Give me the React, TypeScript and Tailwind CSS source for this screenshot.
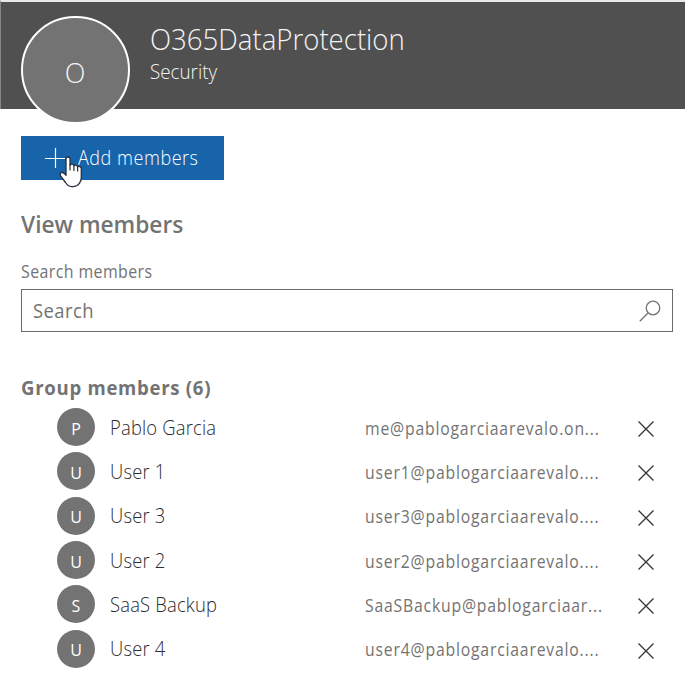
import React from "react";

const members = [
  { initial: "P", name: "Pablo Garcia", email: "me@pablogarciaarevalo.on..." },
  { initial: "U", name: "User 1", email: "user1@pablogarciaarevalo...." },
  { initial: "U", name: "User 3", email: "user3@pablogarciaarevalo...." },
  { initial: "U", name: "User 2", email: "user2@pablogarciaarevalo...." },
  { initial: "S", name: "SaaS Backup", email: "SaaSBackup@pablogarciaar..." },
  { initial: "U", name: "User 4", email: "user4@pablogarciaarevalo...." },
];

function Pointer() {
  return (
    <svg className="absolute left-[38px] top-[19px] h-[34px] w-[25px]" viewBox="0 0 25 34" aria-hidden="true">
      <path
        d="M7 4C7 2.700 7.800 2 9 2s2 .7 2 2v6c.4-.5 1-.8 1.700-.8 1.200 0 2 .7 2.200 1.500.4-.4.9-.6 1.500-.6 1.200 0 2 .7 2.200 1.700.4-.4.9-.5 1.400-.5 1.400 0 2.300 1 2.300 2.300v8.300c0 2.600-.6 4.700-1.800 6.300-1.600 2.200-4 3.500-6.900 3.500-3.100 0-5.400-1.500-7.100-4.200L1.600 20.800c-.7-1.400-.4-2.400.6-3 1-.6 2.200-.2 3.100.8L7 20.300z"
        fill="#fff" stroke="#2b2f3d" strokeWidth="1.300" strokeLinejoin="round"
      />
      <path d="M11 9.500v6M14.900 10.500v5.500M18.600 12v4.500" stroke="#2b2f3d" strokeWidth="1.200" />
    </svg>
  );
}

export default function App() {
  return (
    <main className="h-[685px] w-[685px] overflow-hidden bg-white font-['Open_Sans','Noto_Sans',sans-serif] text-[#737373]">
      <header className="flex h-[109px] border-t-2 border-l border-t-[#e8e8ea] border-l-[#858585] bg-[#505050] pl-[19.500px] text-[#f4f4f4]">
        <div className="mt-[14px] flex h-[108px] w-[109px] shrink-0 items-center justify-center rounded-full border-2 border-white bg-[#737373] pt-[6px] text-[27px] font-light">
          O
        </div>
        <div className="pl-[20.500px] pt-[17px] whitespace-nowrap">
          <h1 className="origin-left scale-x-[0.92] text-[30px] leading-[40px] font-light">O365DataProtection</h1>
          <p className="origin-left scale-x-[0.94] text-[20px] leading-[26px] font-light">Security</p>
        </div>
      </header>
      <section className="pl-[21px] pt-[27px]">
        <button className="relative flex h-[44px] w-[203px] items-center bg-[#1764ab] pl-[24px] text-white">
          <svg className="h-[20px] w-[20px]" viewBox="0 0 20 20" aria-hidden="true">
            <path d="M10.500 0v20M0 10.500h20" stroke="#fff" strokeWidth="1.200" />
          </svg>
          <span className="ml-[13px] origin-left scale-x-[0.9] text-[20px] leading-[26px] font-light tracking-[0.6px] whitespace-nowrap">Add members</span>
          <Pointer />
        </button>
        <h2 className="mt-[27px] origin-left scale-x-[0.945] text-[24px] leading-[34px] font-semibold">View members</h2>
        <label className="mt-[18px] block origin-left scale-x-[0.91] text-[17.500px] leading-[24px] tracking-[0.45px]">Search members</label>
        <div className="mt-[6px] flex h-[43px] w-[652px] items-center justify-between border border-[#6b6b6b] pl-[11px] pr-[11px]">
          <span className="origin-left scale-x-[0.92] pt-px text-[20px] leading-[26px] tracking-[0.5px]">Search</span>
          <svg className="h-[22px] w-[22px]" viewBox="0 0 22 22" fill="none" stroke="#737373" strokeWidth="1.300" aria-hidden="true">
            <circle cx="14" cy="8" r="6.800" />
            <path d="M9.200 12.800L.8 21.200" />
          </svg>
        </div>
        <h3 className="mt-[42px] origin-left scale-x-[0.93] text-[20px] leading-[28px] font-bold tracking-[0.75px]">Group members (6)</h3>
        <ul className="mt-[3px]">
          {members.map((m) => (
            <li key={m.name} className="flex h-[44.300px] items-center pl-[36px] whitespace-nowrap">
              <span className="flex h-[38px] w-[38px] shrink-0 items-center justify-center rounded-full bg-[#737373] pt-[3px] text-[16px] text-white">{m.initial}</span>
              <span className="ml-[15px] w-[255px] shrink-0 origin-left scale-x-[0.92] pt-px text-[20px] leading-[26px] font-light tracking-[0.2px] text-[#2b2b2b]">{m.name}</span>
              <span className="w-[273px] shrink-0 origin-left scale-x-[0.9] pt-px text-[17.500px] leading-[24px] tracking-[0.9px]">{m.email}</span>
              <svg className="mt-[4px] h-[16px] w-[16px] shrink-0" viewBox="0 0 16 16" aria-hidden="true">
                <path d="M.5.5l15 15M15.500.5l-15 15" stroke="#333" strokeWidth="1.300" />
              </svg>
            </li>
          ))}
        </ul>
      </section>
    </main>
  );
}
